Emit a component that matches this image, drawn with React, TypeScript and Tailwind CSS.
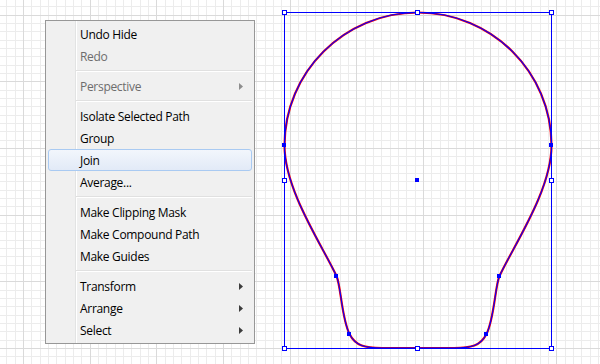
import React from 'react';

type Item =
  | { kind: 'item'; label: string; disabled?: boolean; submenu?: boolean; active?: boolean }
  | { kind: 'sep' };

const items: Item[] = [
  { kind: 'item', label: 'Undo Hide' },
  { kind: 'item', label: 'Redo', disabled: true },
  { kind: 'sep' },
  { kind: 'item', label: 'Perspective', disabled: true, submenu: true },
  { kind: 'sep' },
  { kind: 'item', label: 'Isolate Selected Path' },
  { kind: 'item', label: 'Group' },
  { kind: 'item', label: 'Join', active: true },
  { kind: 'item', label: 'Average...' },
  { kind: 'sep' },
  { kind: 'item', label: 'Make Clipping Mask' },
  { kind: 'item', label: 'Make Compound Path' },
  { kind: 'item', label: 'Make Guides' },
  { kind: 'sep' },
  { kind: 'item', label: 'Transform', submenu: true },
  { kind: 'item', label: 'Arrange', submenu: true },
  { kind: 'item', label: 'Select', submenu: true },
];

// grid lines every 8.333px, major every 8th
const gridLines = () => {
  const step = 200 / 24;
  const minor: JSX.Element[] = [];
  const major: JSX.Element[] = [];
  for (let k = -3; k < 72; k++) {
    const x = Math.floor(23.34 + k * step);
    if (x < 0 || x > 600) continue;
    const isMajor = ((k % 8) + 8) % 8 === 0;
    (isMajor ? major : minor).push(
      <rect key={'v' + k} x={x} y={0} width={1} height={364} fill={isMajor ? '#dadada' : '#ececec'} />
    );
  }
  for (let k = -2; k < 44; k++) {
    const y = Math.floor(15.01 + k * step);
    if (y < 0 || y > 364) continue;
    const isMajor = ((k % 8) + 8) % 8 === 0;
    (isMajor ? major : minor).push(
      <rect key={'h' + k} x={0} y={y} width={600} height={1} fill={isMajor ? '#dadada' : '#ececec'} />
    );
  }
  return [...minor, ...major];
};

const handles = [
  [284, 12], [417, 12], [551, 12],
  [284, 180], [551, 180],
  [284, 348], [417, 348], [551, 348],
];

const anchors = [
  [282, 143], [549, 143], [334, 274], [497, 274], [347, 332], [484, 332], [415, 178],
];

const shape =
  'M 418 12.5 C 344.3 12.5 284.5 72 284.5 145.5 C 284.5 190 322 245 336.5 276 ' +
  'C 341 286 341.5 318 349.5 334 C 355.5 346 365 348 382 348 L 454 348 ' +
  'C 471 348 480.5 346 486.5 334 C 494.5 318 495 286 499.5 276 ' +
  'C 514 245 551.5 190 551.5 145.5 C 551.5 72 491.7 12.5 418 12.5 Z';

const Canvas = () => (
  <svg className="absolute inset-0" width={600} height={364} viewBox="0 0 600 364">
    <g shapeRendering="crispEdges">{gridLines()}</g>
    <path d={shape} fill="none" stroke="#ff0000" strokeWidth={2.2} />
    <path d={shape} fill="none" stroke="#0000ff" strokeWidth={1.1} />
    <g shapeRendering="crispEdges">
      <rect x={284.5} y={12.5} width={267} height={336} fill="none" stroke="#0000ff" strokeWidth={1} />
      {handles.map(([x, y], i) => (
        <rect key={i} x={x - 1.5} y={y - 1.5} width={4} height={4} fill="#ffffff" stroke="#0000ff" strokeWidth={1} />
      ))}
      {anchors.map(([x, y], i) => (
        <rect key={i} x={x} y={y} width={4} height={4} fill="#0000ff" />
      ))}
    </g>
  </svg>
);

const Arrow = ({ disabled }: { disabled?: boolean }) => (
  <svg width="4" height="7" viewBox="0 0 4 7" className="absolute right-[9px] top-[8px]">
    <path d="M0 0 L4 3.5 L0 7 Z" fill={disabled ? '#8d8d8d' : '#3c3c3c'} />
  </svg>
);

const ContextMenu = () => (
  <div className="absolute left-[45px] top-[20px] w-[210px] border border-[#979797] bg-[#f0f0f0] p-[2px] font-['Segoe_UI','Open_Sans',sans-serif] text-[12px] leading-none tracking-[-0.3px]">
    {/* icon gutter */}
    <div className="absolute left-[29px] top-0 bottom-0 flex">
      <div className="w-[1px] bg-[#e2e3e3]" />
      <div className="w-[1px] bg-white" />
    </div>
    {items.map((it, i) =>
      it.kind === 'sep' ? (
        <div key={i} className="relative h-[8px] pl-[28px] pt-[3px]">
          <div className="h-[1px] bg-[#e0e0e0]" />
          <div className="h-[1px] bg-white" />
        </div>
      ) : (
        <div
          key={i}
          className={`relative flex h-[22px] items-center pt-[1px] ${
            it.active
              ? 'rounded-[3px] border border-[#a9caf2] bg-gradient-to-b from-[#f2f6fc] to-[#e2eaf7] pl-[31px]'
              : 'pl-[32px]'
          } ${it.disabled ? 'text-[#6d6d6d]' : 'text-black'}`}
        >
          <span>{it.label}</span>
          {it.submenu && <Arrow disabled={it.disabled} />}
        </div>
      )
    )}
  </div>
);

export default function App() {
  return (
    <div className="relative h-[364px] w-[600px] overflow-hidden bg-white">
      <Canvas />
      <ContextMenu />
    </div>
  );
}
